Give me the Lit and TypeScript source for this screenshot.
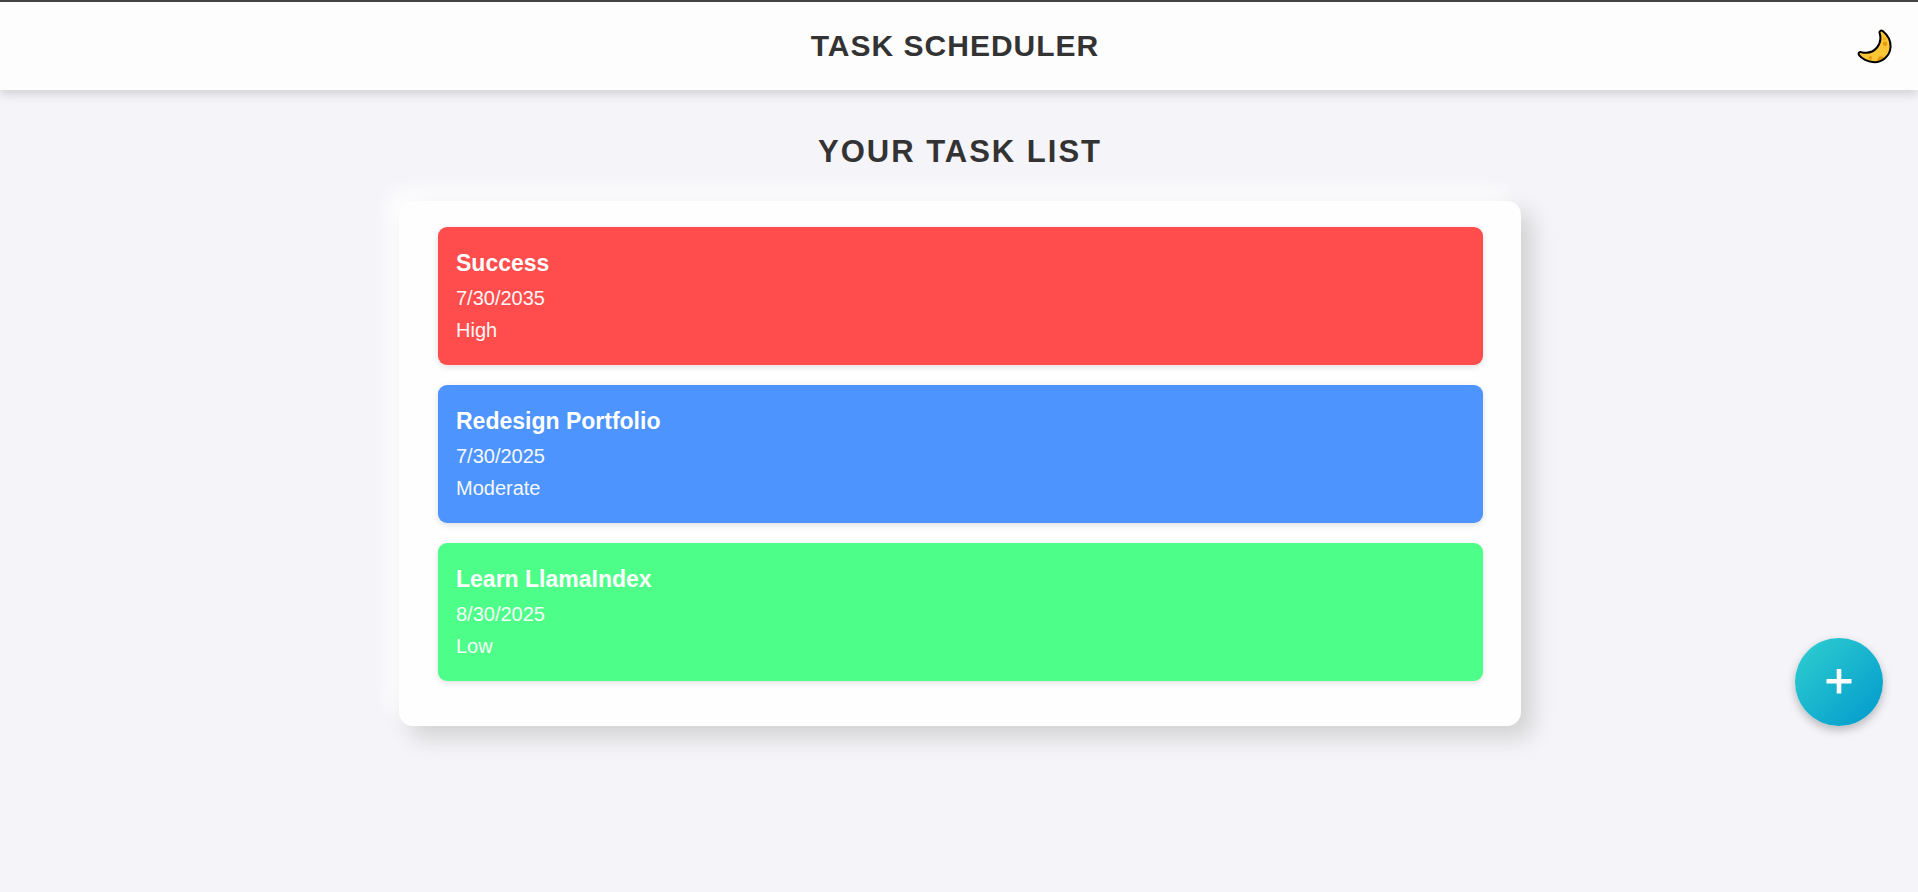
import { LitElement, html, css } from "lit";
import { customElement, property, state } from "lit/decorators.js";

interface Task {
  title: string;
  date: string;
  priority: "High" | "Moderate" | "Low";
}

@customElement("task-card")
class TaskCard extends LitElement {
  @property({ attribute: false }) task!: Task;

  static styles = css`
    :host {
      display: block;
    }
    .card {
      padding: 18px 18px 19px;
      border-radius: 9px;
      color: #fff;
      box-shadow: 0 2px 6px rgba(0, 0, 0, 0.12);
    }
    .high {
      background: #ff4d4d;
    }
    .moderate {
      background: #4d94ff;
    }
    .low {
      background: #4dff88;
    }
    .title {
      margin: 0 0 1px;
      font-size: 23px;
      line-height: 36px;
      font-weight: 700;
    }
    .detail {
      margin: 0;
      font-size: 20px;
      line-height: 32px;
      opacity: 0.95;
    }
  `;

  render() {
    const { title, date, priority } = this.task;
    return html`
      <article class="card ${priority.toLowerCase()}">
        <h3 class="title">${title}</h3>
        <p class="detail">${date}</p>
        <p class="detail">${priority}</p>
      </article>
    `;
  }
}

@customElement("app-root")
class AppRoot extends LitElement {
  @state() private tasks: Task[] = [
    { title: "Success", date: "7/30/2035", priority: "High" },
    { title: "Redesign Portfolio", date: "7/30/2025", priority: "Moderate" },
    { title: "Learn LlamaIndex", date: "8/30/2025", priority: "Low" },
  ];

  static styles = css`
    :host {
      display: block;
      box-sizing: border-box;
      min-height: 100vh;
      background: #f4f4f9;
      color: #333;
      font-family: "Liberation Sans", Arial, sans-serif;
    }
    .header {
      display: grid;
      grid-template-columns: 1fr auto 1fr;
      align-items: center;
      padding: 26px 26px 26px 18px;
      border-top: 2px solid #444;
      background: #fdfdfd;
      box-shadow: 0 4px 10px rgba(0, 0, 0, 0.15);
    }
    .brand {
      grid-column: 2;
      margin: 0;
      font-size: 30px;
      line-height: 36px;
      font-weight: 700;
      letter-spacing: 1px;
      text-transform: uppercase;
    }
    .theme {
      grid-column: 3;
      justify-self: end;
      display: block;
      padding: 0;
      border: 0;
      background: none;
      cursor: pointer;
    }
    .theme svg,
    .add svg {
      display: block;
    }
    .main {
      padding: 42px 16px 42px 18px;
    }
    .heading {
      margin: 0 0 29px;
      font-size: 31px;
      line-height: 40px;
      font-weight: 700;
      letter-spacing: 2px;
      text-align: center;
      text-transform: uppercase;
    }
    .list {
      display: grid;
      gap: 20px;
      box-sizing: border-box;
      max-width: 1122px;
      margin: 0 auto;
      padding: 26px 38px 45px 39px;
      list-style: none;
      border-radius: 14px;
      background: #fefefe;
      box-shadow: 11px 11px 22px #d1d1d1, -11px -11px 22px #fff;
    }
    .add {
      position: fixed;
      right: 35px;
      bottom: 166px;
      display: grid;
      place-items: center;
      width: 88px;
      height: 88px;
      padding: 0;
      border: 0;
      border-radius: 50%;
      background: linear-gradient(135deg, #30cfd0, #0099cc);
      box-shadow: 0 4px 10px rgba(0, 0, 0, 0.25);
      cursor: pointer;
    }
  `;

  render() {
    return html`
      <header class="header">
        <h1 class="brand">Task Scheduler</h1>
        <button class="theme" type="button" aria-label="Toggle theme">
          <svg width="35" height="36" viewBox="0 0 35 36">
            <path
              d="M22.700 5.400C21.900 3.300 24 1.700 26 3.200C31 7.400 34 13 33.500 19.500C32.800 28 25.500 34.200 17.500 34.200C10.500 34.200 4.500 30.500 2.100 27.200C0.900 25.200 2.300 23.600 4.500 24.200C10.500 25.600 16.500 23.800 20 19.500C23 15.700 24 9.800 22.700 5.400Z"
              fill="#fcc637"
            />
            <circle cx="28" cy="15.800" r="2.200" fill="#e69b08" />
            <circle cx="27.300" cy="11" r="1.500" fill="#efae1a" />
            <circle cx="13.500" cy="29.800" r="1.700" fill="#e69b08" />
            <path d="M20.300 33.500Q20.500 28.300 23.800 28.300T26.800 31.300Z" fill="#e69b08" />
            <path
              d="M22.700 5.400C21.900 3.300 24 1.700 26 3.200C31 7.400 34 13 33.500 19.500C32.800 28 25.500 34.200 17.500 34.200C10.500 34.200 4.500 30.500 2.100 27.200C0.900 25.200 2.300 23.600 4.500 24.200C10.500 25.600 16.500 23.800 20 19.500C23 15.700 24 9.800 22.700 5.400Z"
              fill="none"
              stroke="#000"
              stroke-width="2"
              stroke-linejoin="round"
            />
          </svg>
        </button>
      </header>
      <main class="main">
        <h2 class="heading">Your Task List</h2>
        <ul class="list">
          ${this.tasks.map(
            (task) => html`<li><task-card .task=${task}></task-card></li>`
          )}
        </ul>
      </main>
      <button class="add" type="button" aria-label="Add task">
        <svg width="26" height="26" viewBox="0 0 26 26">
          <path d="M0.500 12.300H25.500M13 0V24.500" stroke="#fff" stroke-width="4.600" />
        </svg>
      </button>
    `;
  }
}
